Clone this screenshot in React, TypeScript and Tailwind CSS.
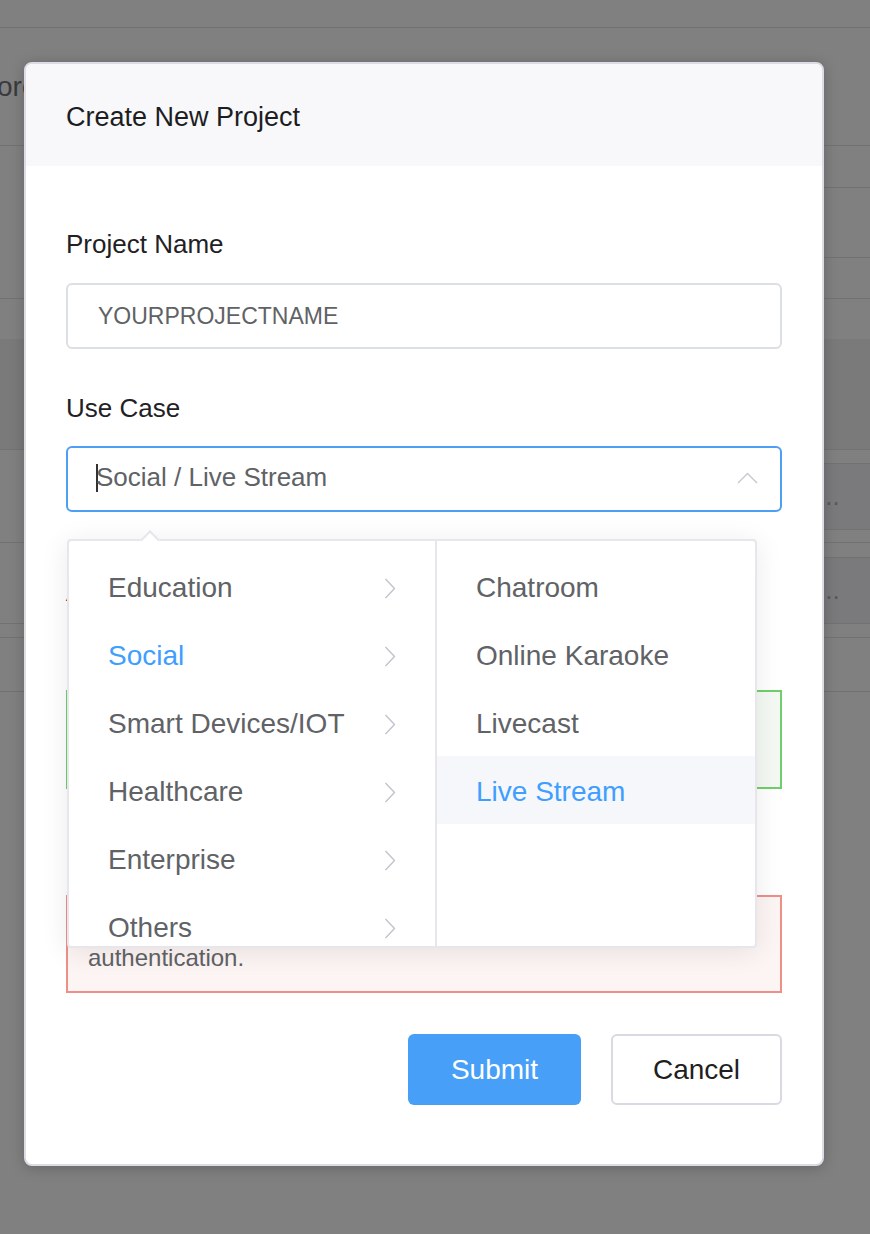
import React from 'react';

const line = 'border-b border-[#727272]';

const Background: React.FC = () => (
    <div className="flex h-full flex-col text-[#3a3a3e]">
        <div className={`h-[28px] ${line}`} />
        <div className={`flex h-[118px] items-center ${line}`}>
            <span className="-ml-[3px] text-[28px]">ore</span>
        </div>
        <div className={`flex h-[153px] ${line}`}>
            <div className="flex-1" />
            <div className="flex w-[60px] flex-col">
                <div className={`h-[42px] ${line}`} />
                <div className={`h-[70px] ${line}`} />
            </div>
        </div>
        <div className={`flex h-[151px] flex-col ${line}`}>
            <div className="h-[40px]" />
            <div className="flex-1 bg-[#7a7a7b]" />
        </div>
        <div className={`flex h-[93px] ${line}`}>
            <div className="flex-1" />
            <div className="flex w-[60px] flex-col">
                <div className={`h-[14px] ${line}`} />
                <div className={`flex h-[66px] items-center bg-[#7a7a7c] pl-[8px] text-[26px] text-[#58585c] ${line}`}>...</div>
            </div>
        </div>
        <div className={`flex h-[81px] ${line}`}>
            <div className="flex-1" />
            <div className="flex w-[60px] flex-col">
                <div className={`h-[15px] ${line}`} />
                <div className="flex flex-1 items-center bg-[#7a7a7c] pl-[8px] text-[26px] text-[#58585c]">...</div>
            </div>
        </div>
        <div className={`h-[14px] ${line}`} />
        <div className={`h-[54px] ${line}`} />
        <div className="flex-1" />
    </div>
);

const ChevronRight = () => (
    <svg width="12" height="21" viewBox="0 0 12 21" fill="none">
        <polyline points="1.5,1 10.5,10.5 1.5,20" stroke="#c0c4cc" strokeWidth="1.4" />
    </svg>
);

const ChevronUp = () => (
    <svg width="21" height="12" viewBox="0 0 21 12" fill="none">
        <polyline points="1,11 10.5,1.5 20,11" stroke="#c6c8ce" strokeWidth="1.4" />
    </svg>
);

const categories = ['Education', 'Social', 'Smart Devices/IOT', 'Healthcare', 'Enterprise', 'Others'];
const socialCases = ['Chatroom', 'Online Karaoke', 'Livecast', 'Live Stream'];

const Cascader: React.FC = () => (
    <div className="absolute left-[1px] top-[93px] z-10 h-[409px] w-[690px] rounded-[4px] border-2 border-[#e6e6ec] bg-white shadow-[0_4px_28px_rgba(0,0,0,0.09)]">
        <div className="absolute -top-[8px] left-[74px] h-[14px] w-[14px] rotate-45 border-l-2 border-t-2 border-[#e6e6ec] bg-white" />
        <div className="flex h-full overflow-hidden">
            <ul className="w-[366px] pt-[11px]">
                {categories.map((c) => (
                    <li key={c} className="flex h-[68px] items-center justify-between pl-[39px] pr-[39px] pt-[4px]">
                        <span className={`text-[28px] ${c === 'Social' ? 'text-[#409eff]' : 'text-[#606266]'}`}>{c}</span>
                        <ChevronRight />
                    </li>
                ))}
            </ul>
            <ul className="flex-1 border-l-2 border-[#e6e6ec] pt-[11px]">
                {socialCases.map((s) => (
                    <li
                        key={s}
                        className={`flex h-[68px] items-center pl-[39px] pt-[4px] text-[28px] ${s === 'Live Stream' ? 'bg-[#f5f7fa] text-[#409eff]' : 'text-[#606266]'}`}
                    >
                        {s}
                    </li>
                ))}
            </ul>
        </div>
    </div>
);

const App: React.FC = () => {
    return (
        <div className="relative h-[1234px] w-full overflow-hidden bg-[#808080] font-['Liberation_Sans',Arial,sans-serif]">
            <Background />

            {/* modal */}
            <div className="absolute left-[24px] top-[62px] w-[800px] rounded-[8px] border-2 border-[#dcdce6] bg-white shadow-[0_2px_14px_rgba(0,0,0,0.22)]">
                <div className="flex h-[102px] items-center rounded-t-[6px] bg-[#f8f8fb] pl-[40px] pt-[4px] text-[27px] text-[#1d1d1f]">
                    Create New Project
                </div>

                <div className="flex flex-col px-[40px] pb-[59px] pt-[60px]">
                    <label className="text-[26px] leading-[36px] text-[#1f2124]">Project Name</label>
                    <div className="mt-[21px] flex h-[66px] items-center rounded-[6px] border-2 border-[#dcdfe6] pl-[30px] text-[23px] text-[#606266]">
                        YOURPROJECTNAME
                    </div>

                    <label className="mt-[41px] text-[26px] leading-[36px] text-[#1f2124]">Use Case</label>
                    <div className="relative mt-[20px]">
                        <div className="flex h-[66px] items-center justify-between rounded-[6px] border-2 border-[#4d9ef5] pb-[3px] pl-[28px] pr-[22px]">
                            <span className="flex items-center text-[26px] text-[#606266]">
                                <span className="-mr-[2px] inline-block h-[28px] w-[2px] bg-[#333]" />
                                Social / Live Stream
                            </span>
                            <ChevronUp />
                        </div>
                        <Cascader />
                    </div>

                    <label className="mt-[62px] h-[36px] text-[26px] leading-[36px] text-[#1f2124]">Authentication</label>
                    <div className="mt-[20px] flex h-[40px] items-center gap-[30px] pl-[20px] text-[24px] text-[#606266]">
                        <span>App ID</span>
                        <span>App ID + Token</span>
                    </div>
                    <div className="mt-[20px] h-[99px] border-2 border-[#6fcf6c] bg-[#f5f9f4] px-[20px] py-[12px] text-[24px] text-[#606266]">
                        Recommended for production
                    </div>

                    <label className="mt-[30px] h-[36px] pl-[20px] text-[26px] leading-[36px] text-[#1f2124]">Security</label>
                    <div className="mt-[40px] h-[98px] border-2 border-[#ee8f88] bg-[#fdf4f4] px-[20px] py-[10px] text-[24px] leading-[34px] text-[#606266]">
                        <p>Anyone with your App ID can join without token</p>
                        <p>authentication.</p>
                    </div>

                    <div className="mt-[41px] flex justify-end gap-[30px]">
                        <button className="h-[71px] w-[173px] rounded-[6px] bg-[#479ff7] text-[28px] text-white">Submit</button>
                        <button className="h-[71px] w-[171px] rounded-[6px] border-2 border-[#d9d9e3] bg-white text-[28px] text-[#1f1f1f]">
                            Cancel
                        </button>
                    </div>
                </div>
            </div>
        </div>
    );
};

export default App;
